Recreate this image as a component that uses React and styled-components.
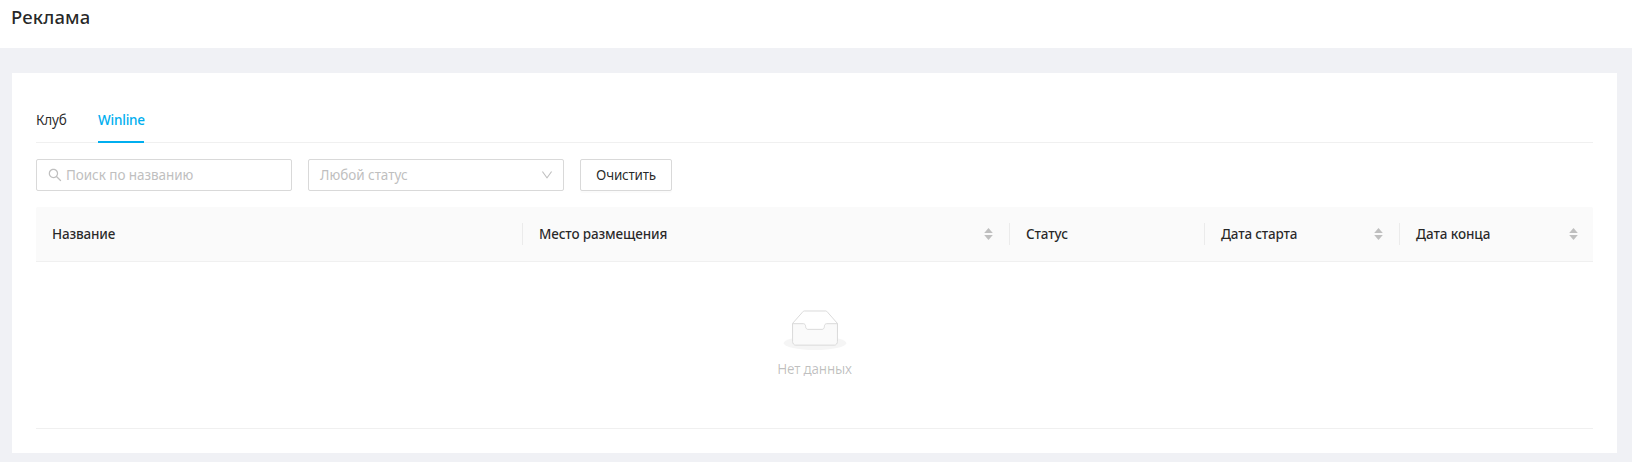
import React from 'react';
import styled, { createGlobalStyle } from 'styled-components';

const GlobalStyle = createGlobalStyle`
  *, *::before, *::after { box-sizing: border-box; }
  body {
    margin: 0;
    background: #f0f1f5;
    color: rgba(0, 0, 0, 0.85);
    font: 13.5px/22px 'Noto Sans', 'Open Sans', sans-serif;
  }
`;

const Page = styled.div`
  height: 462px;
  overflow: hidden;
  background: #f0f1f5;
`;

const PageHeader = styled.header`
  height: 48px;
  padding: 1px 11px 0;
  background: #fff;
`;

const Title = styled.h1`
  margin: 0;
  font-size: 18.5px;
  line-height: 32px;
  font-weight: 500;
  letter-spacing: 0.15px;
`;

const Card = styled.main`
  height: 380px;
  margin: 25px 15px 0 12px;
  padding: 24px;
  background: #fff;
`;

const Tabs = styled.nav`
  display: flex;
  gap: 32px;
  height: 46px;
  border-bottom: 1px solid #f0f0f0;
`;

const Tab = styled.a`
  height: 46px;
  width: ${(p) => p.$width}px;
  padding-top: 12px;
  white-space: nowrap;
  letter-spacing: ${(p) => p.$spacing || 0}px;
  color: ${(p) => (p.$active ? '#00aeef' : 'inherit')};
  border-bottom: 2px solid ${(p) => (p.$active ? '#00aeef' : 'transparent')};
  font-weight: ${(p) => (p.$active ? 500 : 400)};
`;

const Filters = styled.div`
  display: flex;
  gap: 16px;
  margin: 16px 0;
`;

const Field = styled.div`
  display: flex;
  align-items: center;
  justify-content: ${(p) => (p.$spread ? 'space-between' : 'flex-start')};
  gap: 4px;
  width: 256px;
  height: 32px;
  padding: 0 10px 0 11px;
  border: 1px solid #d9d9d9;
  border-radius: 2px;
  color: #bfbfbf;
`;

const Label = styled.span`
  letter-spacing: ${(p) => p.$spacing || 0}px;
  white-space: nowrap;
`;

const Icon = styled.svg`
  display: block;
  flex: none;
  fill: currentColor;
`;

const Button = styled.button`
  width: 92px;
  height: 32px;
  padding: 0;
  border: 1px solid #d9d9d9;
  border-radius: 2px;
  background: #fff;
  box-shadow: 0 2px 0 rgba(0, 0, 0, 0.016);
  color: inherit;
  font: inherit;
`;

const Table = styled.div`
  border-bottom: 1px solid #f0f0f0;
`;

const HeadRow = styled.div`
  display: grid;
  grid-template-columns: 487px 487px 195px 195px 193px;
  align-items: center;
  height: 55px;
  background: #fafafa;
  border-bottom: 1px solid #f0f0f0;
  border-radius: 2px 2px 0 0;
`;

const HeadCell = styled.div`
  display: flex;
  align-items: center;
  justify-content: space-between;
  height: 22px;
  padding: 0 16px;
  border-right: 1px solid #ebebeb;
  font-weight: 500;
  &:last-child { border-right-color: transparent; padding-right: 14px; }
`;

const Sorter = styled.span`
  display: flex;
  flex-direction: column;
  gap: 2px;
  color: #bfbfbf;
`;

const Empty = styled.div`
  display: flex;
  flex-direction: column;
  align-items: center;
  gap: 8px;
  height: 166px;
  padding-top: 48px;
  color: rgba(0, 0, 0, 0.25);
`;

const columns = [
  { title: 'Название', spacing: -0.17 },
  { title: 'Место размещения', spacing: -0.14, sortable: true },
  { title: 'Статус', spacing: -0.12 },
  { title: 'Дата старта', spacing: -0.2, sortable: true },
  { title: 'Дата конца', spacing: -0.08, sortable: true },
];

function SearchIcon() {
  return (
    <Icon width="14" height="14" viewBox="64 64 896 896">
      <path d="M909.6 854.5L649.9 594.8C690.2 542.7 712 479 712 412c0-80.2-31.3-155.4-87.9-212.1-56.6-56.7-132-87.9-212.1-87.9s-155.5 31.3-212.1 87.9C143.2 256.5 112 331.8 112 412c0 80.1 31.3 155.5 87.9 212.1C256.5 680.8 331.8 712 412 712c67 0 130.6-21.8 182.7-62l259.7 259.6a8.2 8.2 0 0011.6 0l43.6-43.5a8.2 8.2 0 000-11.6zM570.4 570.4C528 612.7 471.8 636 412 636s-116-23.3-158.4-65.6C211.3 528 188 471.8 188 412s23.3-116.1 65.6-158.4C296 211.3 352.2 188 412 188s116.1 23.2 158.4 65.6S636 352.2 636 412s-23.3 116.1-65.6 158.4z" />
    </Icon>
  );
}

function DownIcon() {
  return (
    <Icon width="12" height="12" viewBox="64 64 896 896">
      <path d="M884 256h-75c-5.1 0-9.9 2.5-12.9 6.6L512 654.2 227.9 262.6c-3-4.1-7.8-6.6-12.9-6.6h-75c-6.5 0-10.3 7.4-6.5 12.7l352.6 486.1c12.8 17.6 39 17.6 51.7 0l352.6-486.1c3.9-5.3.1-12.7-6.4-12.7z" />
    </Icon>
  );
}

function SortIcon() {
  return (
    <Sorter>
      <Icon width="9" height="5" viewBox="0 0 9 5"><path d="M4.5 0L8.8 5H.2z" /></Icon>
      <Icon width="9" height="5" viewBox="0 0 9 5"><path d="M4.5 5L8.8 0H.2z" /></Icon>
    </Sorter>
  );
}

function EmptyIcon() {
  return (
    <svg width="64" height="40" viewBox="0 0 64 41">
      <g transform="translate(0 1)" fill="none" fillRule="evenodd">
        <ellipse fill="#f5f5f5" cx="32" cy="33" rx="32" ry="7" />
        <g fillRule="nonzero" stroke="#d9d9d9">
          <path d="M55 12.76L44.854 1.258C44.367.474 43.656 0 42.907 0H21.093c-.749 0-1.46.474-1.947 1.257L9 12.761V22h46v-9.24z" />
          <path fill="#fafafa" d="M41.613 15.931c0-1.605.994-2.93 2.227-2.931H55v18.137C55 33.26 53.68 35 52.05 35h-40.1C10.32 35 9 33.259 9 31.137V13h11.16c1.233 0 2.227 1.323 2.227 2.928v.022c0 1.605 1.005 2.901 2.237 2.901h14.752c1.232 0 2.237-1.308 2.237-2.913v-.007z" />
        </g>
      </g>
    </svg>
  );
}

export default function App() {
  return (
    <Page>
      <GlobalStyle />
      <PageHeader>
        <Title>Реклама</Title>
      </PageHeader>
      <Card>
        <Tabs>
          <Tab $width={30} $spacing={-0.2}>Клуб</Tab>
          <Tab $active $width={46} $spacing={-0.2}>Winline</Tab>
        </Tabs>
        <Filters>
          <Field>
            <SearchIcon />
            <Label $spacing={-0.06}>Поиск по названию</Label>
          </Field>
          <Field $spread>
            <Label $spacing={-0.03}>Любой статус</Label>
            <DownIcon />
          </Field>
          <Button><Label $spacing={-0.22}>Очистить</Label></Button>
        </Filters>
        <Table>
          <HeadRow>
            {columns.map((c) => (
              <HeadCell key={c.title}>
                <Label $spacing={c.spacing}>{c.title}</Label>
                {c.sortable && <SortIcon />}
              </HeadCell>
            ))}
          </HeadRow>
          <Empty>
            <EmptyIcon />
            <Label $spacing={-0.22}>Нет данных</Label>
          </Empty>
        </Table>
      </Card>
    </Page>
  );
}
